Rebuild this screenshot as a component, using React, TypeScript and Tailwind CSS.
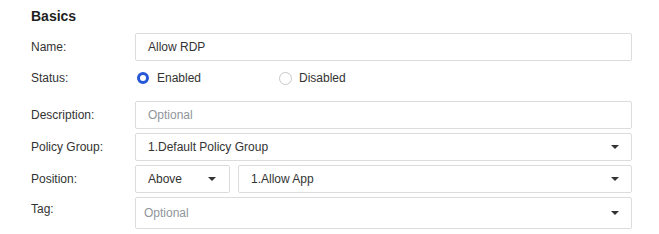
import React from "react";

function Arrow() {
  return (
    <svg width="8" height="4" viewBox="0 0 8 4" className="shrink-0">
      <path d="M0 0 L8 0 L4 4 Z" fill="#333333" />
    </svg>
  );
}

function Row({
  label,
  children,
  className = "",
  labelClass = "h-[28px] leading-[28px]",
}: {
  label: string;
  children: React.ReactNode;
  className?: string;
  labelClass?: string;
}) {
  return (
    <div className={`flex items-start ${className}`}>
      <div className={`w-[104px] shrink-0 text-[#333333] ${labelClass}`}>{label}</div>
      {children}
    </div>
  );
}

function Select({
  value,
  placeholder,
  className = "",
  arrowPad = "pr-[12px]",
  textPad = "pl-[12px]",
  h = "h-[28px]",
}: {
  value?: string;
  placeholder?: string;
  className?: string;
  arrowPad?: string;
  textPad?: string;
  h?: string;
}) {
  return (
    <div
      className={`flex items-center justify-between ${h} border border-[#dcdcdc] rounded-[2px] bg-white ${textPad} ${arrowPad} ${className}`}
    >
      {value ? (
        <span className="text-[#333333]">{value}</span>
      ) : (
        <span className="text-[#8f959c]">{placeholder}</span>
      )}
      <Arrow />
    </div>
  );
}

export default function App() {
  return (
    <div
      className="w-[659px] h-[234px] bg-white pl-[31px] text-[12px]"
      style={{ fontFamily: '"Liberation Sans", Arial, sans-serif' }}
    >
      <div className="pt-[8px] h-[33px]">
        <div className="text-[14px] font-bold leading-[16px] text-[#1f1f1f]">Basics</div>
      </div>

      <Row label="Name:">
        <div className="w-[497px] h-[28px] border border-[#dcdcdc] rounded-[2px] pl-[12px] flex items-center text-[#333333]">
          Allow RDP
        </div>
      </Row>

      <Row label="Status:" className="mt-[3px]">
        <div className="flex items-center h-[28px]">
          <div className="w-[144px] flex items-center pl-[2px]">
            <div className="w-[12px] h-[12px] rounded-full border-[3.5px] border-[#2557d6] bg-white" />
            <span className="ml-[8px] text-[#333333]">Enabled</span>
          </div>
          <div className="flex items-center">
            <div className="w-[13px] h-[13px] rounded-full border border-[#c8c8c8] bg-white" />
            <span className="ml-[7px] text-[#333333]">Disabled</span>
          </div>
        </div>
      </Row>

      <Row label="Description:" className="mt-[9px]">
        <div className="w-[497px] h-[28px] border border-[#dcdcdc] rounded-[2px] pl-[12px] flex items-center text-[#8f959c]">
          Optional
        </div>
      </Row>

      <Row label="Policy Group:" className="mt-[4px]">
        <Select value="1.Default Policy Group" className="w-[497px]" />
      </Row>

      <Row label="Position:" className="mt-[4px]">
        <div className="flex gap-[8px] w-[497px]">
          <Select value="Above" className="w-[95px]" arrowPad="pr-[13px]" />
          <Select value="1.Allow App" className="w-[394px]" />
        </div>
      </Row>

      <Row label="Tag:" className="mt-[4px]" labelClass="h-[24px] leading-[24px]">
        <Select placeholder="Optional" className="w-[497px]" h="h-[32px]" textPad="pl-[8px]" />
      </Row>
    </div>
  );
}
